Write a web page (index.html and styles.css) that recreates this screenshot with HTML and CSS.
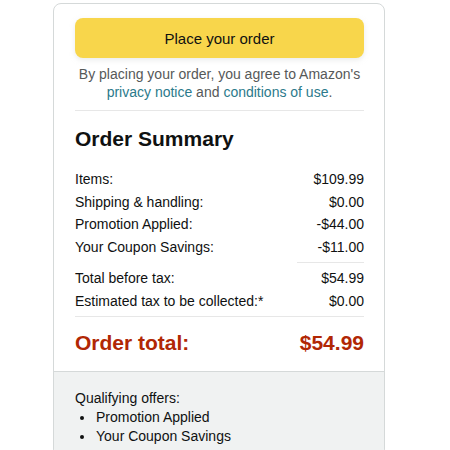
FILE: index.html
```html
<!DOCTYPE html>
<html>
<head>
<meta charset="utf-8">
<link rel="stylesheet" href="styles.css">
</head>
<body>
<div class="card">
  <div class="main">
    <button class="place-btn">Place your order</button>
    <p class="agree">By placing your order, you agree to Amazon's<br><a href="#">privacy notice</a> and <a href="#">conditions of use</a>.</p>
    <hr class="divider">
    <h2 class="title">Order Summary</h2>
    <div class="rows">
      <div class="row"><span>Items:</span><span>$109.99</span></div>
      <div class="row"><span>Shipping &amp; handling:</span><span>$0.00</span></div>
      <div class="row"><span>Promotion Applied:</span><span>-$44.00</span></div>
      <div class="row"><span>Your Coupon Savings:</span><span>-$11.00</span></div>
    </div>
    <div class="subline-wrap"><hr class="subline"></div>
    <div class="rows">
      <div class="row"><span>Total before tax:</span><span>$54.99</span></div>
      <div class="row"><span>Estimated tax to be collected:*</span><span>$0.00</span></div>
    </div>
    <hr class="divider total-divider">
    <div class="row total"><span>Order total:</span><span>$54.99</span></div>
  </div>
  <div class="offers">
    <div class="offers-title">Qualifying offers:</div>
    <ul class="offers-list">
      <li>Promotion Applied</li>
      <li>Your Coupon Savings</li>
    </ul>
  </div>
</div>
</body>
</html>
```

FILE: styles.css
```css
html, body {
  margin: 0;
  padding: 0;
  background: #ffffff;
}
body {
  font-family: "Liberation Sans", Arial, sans-serif;
  color: #0f1111;
  font-size: 14px;
}
.card {
  margin: 3px 0 0 53px;
  width: 330px;
  border: 1px solid #d5d9d9;
  border-radius: 8px;
  overflow: hidden;
}
.main {
  padding: 14px 20px 14px 21px;
}
.place-btn {
  display: block;
  width: 100%;
  height: 40px;
  border: none;
  border-radius: 8px;
  background: #f8d64b;
  box-shadow: 0 2px 5px rgba(213, 217, 217, 0.5);
  font-family: inherit;
  font-size: 15px;
  color: #0f1111;
  padding: 0;
}
.agree {
  margin: 7px 0 0;
  text-align: center;
  font-size: 14px;
  line-height: 18px;
  color: #565959;
}
.agree a {
  color: #2b7a8b;
  text-decoration: none;
}
.divider {
  border: none;
  border-top: 1px solid #e7e7e7;
  margin: 9px 0 0;
}
.title {
  margin: 14px 0 0;
  font-size: 21px;
  line-height: 28px;
  font-weight: bold;
}
.rows {
  display: flex;
  flex-direction: column;
}
.title + .rows {
  margin-top: 15px;
}
.row {
  display: flex;
  justify-content: space-between;
  line-height: 22.5px;
}
.subline-wrap {
  display: flex;
  justify-content: flex-end;
  margin: 4px 0 4px;
}
.subline {
  width: 67px;
  border: none;
  border-top: 1px solid #e7e7e7;
  margin: 0;
}
.total-divider {
  margin-top: 4px;
}
.row.total {
  margin-top: 12px;
  font-size: 21px;
  line-height: 28px;
  font-weight: bold;
  color: #b12704;
}
.offers {
  background: #f0f2f2;
  border-top: 1px solid #d5d9d9;
  padding: 17px 21px 10px;
  line-height: 19px;
}
.offers-list {
  margin: 0;
  padding: 0 0 0 20px;
}
.offers-list li {
  padding-left: 1px;
}
```
